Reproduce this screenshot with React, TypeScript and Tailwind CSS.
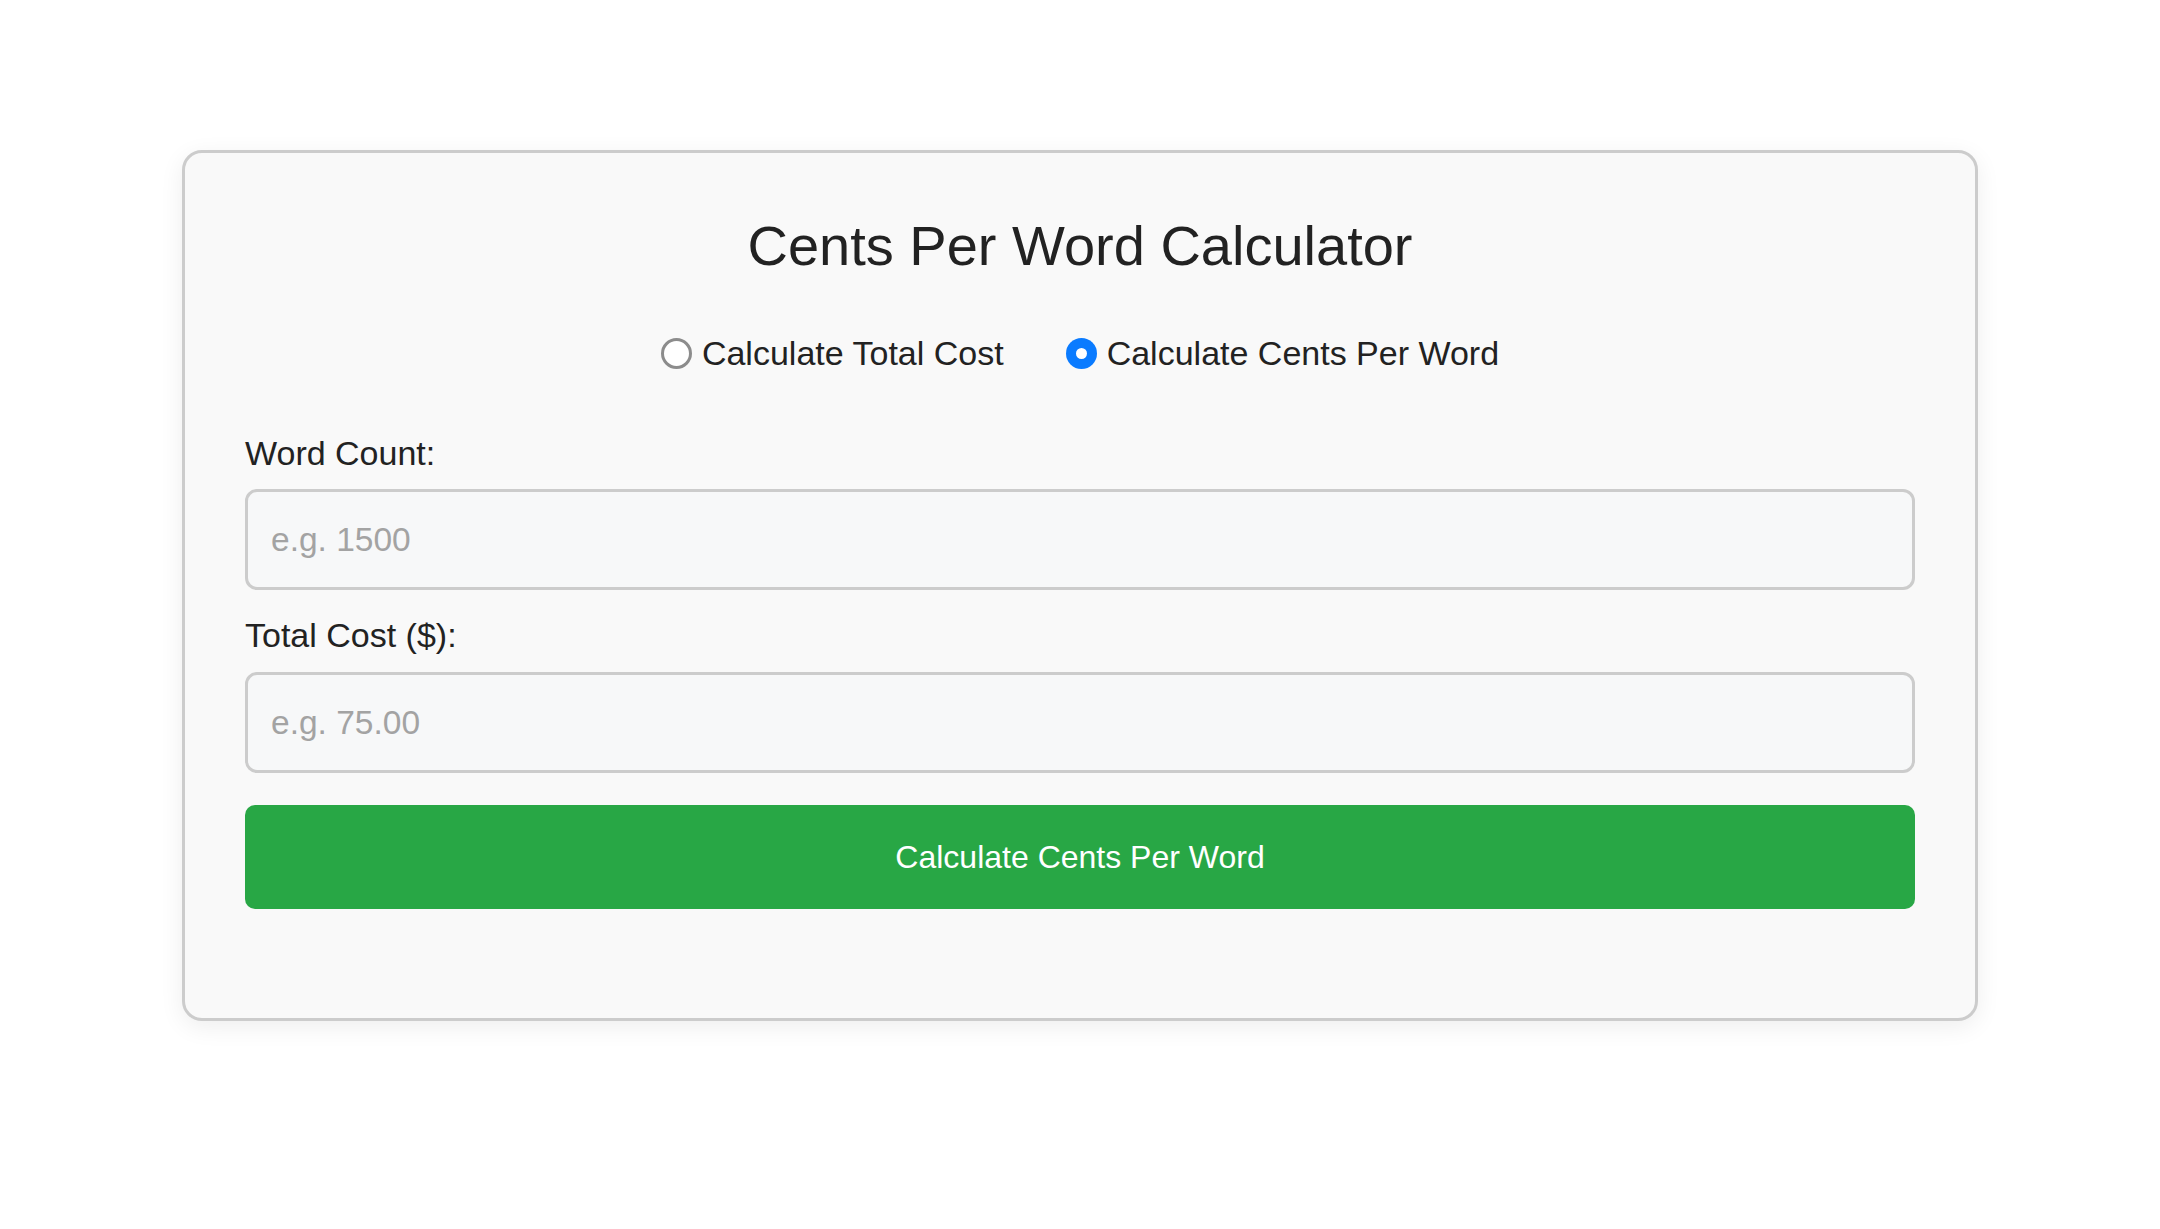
import React, { useState } from 'react';

type Mode = 'total' | 'cpw';

const Radio: React.FC<{ checked: boolean; label: string; onClick: () => void }> = ({ checked, label, onClick }) => (
  <label className="flex items-center gap-[10px] cursor-pointer" onClick={onClick}>
    {checked ? (
      <span className="w-[31px] h-[31px] rounded-full bg-[#0a7bff] flex items-center justify-center">
        <span className="w-[11px] h-[11px] rounded-full bg-white" />
      </span>
    ) : (
      <span className="w-[31px] h-[31px] rounded-full border-[3px] border-[#8c8c8c] bg-white" />
    )}
    <span className="text-[34px] leading-[40px] text-[#222]">{label}</span>
  </label>
);

const App: React.FC = () => {
  const [mode, setMode] = useState<Mode>('cpw');

  return (
    <div className="min-h-screen bg-white font-['Liberation_Sans',Arial,sans-serif] pt-[150px]">
      <div className="mx-auto w-[1796px] rounded-[20px] border-[3px] border-[#cccccc] bg-[#f9f9f9] px-[60px] pt-[61px] pb-[109px] shadow-[0_6px_24px_rgba(0,0,0,0.07)]">
        <h1 className="h-[64px] text-center text-[56px] leading-[64px] font-normal text-[#222]">
          Cents Per Word Calculator
        </h1>

        {/* mode switch */}
        <div className="mt-[55px] h-[40px] flex items-center justify-center gap-[62px]">
          <Radio checked={mode === 'total'} label="Calculate Total Cost" onClick={() => setMode('total')} />
          <Radio checked={mode === 'cpw'} label="Calculate Cents Per Word" onClick={() => setMode('cpw')} />
        </div>

        <label className="block mt-[61px] text-[34px] leading-[38px] text-[#222]">Word Count:</label>
        <input
          type="text"
          placeholder="e.g. 1500"
          className="mt-[17px] block w-full h-[101px] rounded-[12px] border-[3px] border-[#cccccc] bg-[#f7f8f9] px-[23px] text-[33.5px] text-[#222] placeholder:text-[#a3a3a3] outline-none"
        />

        <label className="block mt-[26px] text-[34px] leading-[38px] text-[#222]">Total Cost ($):</label>
        <input
          type="text"
          placeholder="e.g. 75.00"
          className="mt-[18px] block w-full h-[101px] rounded-[12px] border-[3px] border-[#cccccc] bg-[#f7f8f9] px-[23px] text-[33.5px] text-[#222] placeholder:text-[#a3a3a3] outline-none"
        />

        <button className="mt-[32px] block w-full h-[104px] rounded-[10px] bg-[#28a745] text-white text-[32px]">
          {mode === 'cpw' ? 'Calculate Cents Per Word' : 'Calculate Total Cost'}
        </button>
      </div>
    </div>
  );
};

export default App;
